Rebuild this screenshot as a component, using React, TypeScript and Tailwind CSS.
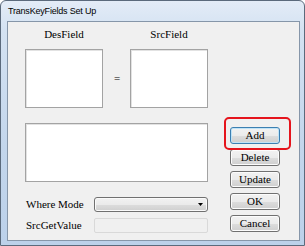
import React from "react";

const serif = "font-['Liberation_Serif','Times_New_Roman',serif] text-[11px] leading-[13px] text-black";

function WinButton({ label, focused = false }: { label: string; focused?: boolean }) {
  return (
    <div
      className={`flex h-[17px] w-[50px] items-center justify-center rounded-[3px] border bg-[linear-gradient(to_bottom,#f2f2f2_0%,#ebebeb_50%,#dddddd_51%,#cfcfcf_100%)] ${serif} ${
        focused
          ? "border-[#3c7fb1] shadow-[inset_0_0_0_1px_#bfe3f7]"
          : "border-[#707070] shadow-[inset_0_0_0_1px_#fcfcfc]"
      }`}
    >
      {label}
    </div>
  );
}

function ListBox({ className }: { className: string }) {
  return (
    <div className={`border border-[#a3a3a3] bg-white shadow-[inset_1px_1px_0_#e2e2e2] ${className}`} />
  );
}

export default function App() {
  return (
    <div className="h-[246px] w-[305px] bg-white">
      {/* window frame */}
      <div className="flex h-[246px] w-[305px] flex-col rounded-t-[6px] border border-[#5b6a7c] bg-[linear-gradient(to_bottom,#e3ecf7_0%,#d4e2f2_12%,#c3d6ec_60%,#bcd1ea_100%)] pb-[4px] pl-[6px] pr-[4px]">
        <div className="flex h-[20px] items-center pl-[1px] pt-[2px] font-['Liberation_Sans',Arial,sans-serif] text-[9px] tracking-[-0.2px] text-black">
          TransKeyFields Set Up
        </div>

        {/* client area */}
        <div className="flex flex-1 flex-col border border-[#8696a9] bg-[#f0f0f0] pl-[17px] pt-[6px]">
          <div className="flex">
            <div className={`w-[78px] text-center ${serif}`}>DesField</div>
            <div className="w-[27px]" />
            <div className={`w-[78px] text-center ${serif}`}>SrcField</div>
          </div>

          <div className="mt-[8px] flex items-center">
            <ListBox className="h-[59px] w-[78px]" />
            <div className={`w-[27px] pl-[1px] text-center ${serif}`}>=</div>
            <ListBox className="h-[59px] w-[78px]" />
          </div>

          <div className="mt-[15px] flex items-start">
            <div className="flex w-[183px] flex-col">
              <ListBox className="h-[59px] w-[183px]" />

              <div className="mt-[15px] flex h-[15px] items-center">
                <div className={`w-[69px] pl-[1px] ${serif}`}>Where Mode</div>
                <div className="relative flex h-[15px] w-[114px] items-center justify-end rounded-[3px] border border-[#707070] bg-[linear-gradient(to_bottom,#f2f2f2_0%,#ebebeb_50%,#dddddd_51%,#cfcfcf_100%)] pr-[4px] shadow-[inset_0_0_0_1px_#fafafa]">
                  <svg width="5" height="3" viewBox="0 0 5 3">
                    <path d="M0 0h5L2.5 3z" fill="#000" />
                  </svg>
                </div>
              </div>

              <div className="mt-[6px] flex h-[15px] items-center">
                <div className={`w-[69px] pl-[1px] ${serif}`}>SrcGetValue</div>
                <div className="h-[15px] w-[114px] rounded-[2px] border border-[#d9d9d9] bg-[#f0f0f0]" />
              </div>
            </div>

            <div className="relative ml-[22px] mt-[4px] flex flex-col gap-[5px]">
              <WinButton label="Add" focused />
              <WinButton label="Delete" />
              <WinButton label="Update" />
              <WinButton label="OK" />
              <WinButton label="Cancel" />
              {/* red annotation around Add */}
              <div className="absolute left-[-6px] top-[-10px] h-[33px] w-[67px] rounded-[5px] border-2 border-[#e5141c]" />
            </div>
          </div>
        </div>
      </div>
    </div>
  );
}
